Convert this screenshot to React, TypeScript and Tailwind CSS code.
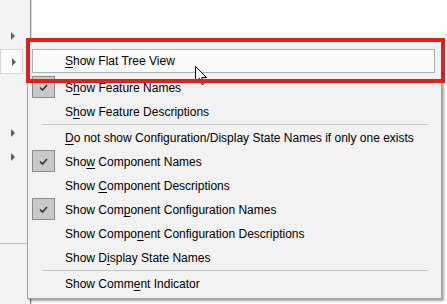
import React from 'react';

type Item = {
  pre: string;
  key: string;
  post: string;
  checked?: boolean;
};

const groupA: Item[] = [
  { pre: 'S', key: 'h', post: 'ow Feature Names', checked: true },
  { pre: 'S', key: 'h', post: 'ow Feature Descriptions' },
];

const groupB: Item[] = [
  { pre: '', key: 'D', post: 'o not show Configuration/Display State Names if only one exists' },
  { pre: 'Sho', key: 'w', post: ' Component Names', checked: true },
  { pre: 'Show ', key: 'C', post: 'omponent Descriptions' },
  { pre: 'Show Com', key: 'p', post: 'onent Configuration Names', checked: true },
  { pre: 'Show Compo', key: 'n', post: 'ent Configuration Descriptions' },
  { pre: 'Show D', key: 'i', post: 'splay State Names' },
];

const groupC: Item[] = [{ pre: 'Show Comm', key: 'e', post: 'nt Indicator' }];

const Arrow = () => (
  <div className="ml-[11px] w-0 h-0 border-y-[4px] border-y-transparent border-l-[4px] border-l-[#606060]" />
);

const Label = ({ item }: { item: Item }) => (
  <span className="whitespace-nowrap text-[12px] text-black leading-none">
    {item.pre}
    <u className="underline underline-offset-2">{item.key}</u>
    {item.post}
  </span>
);

const MenuRow = ({ item }: { item: Item }) => (
  <div className="h-[24px] flex items-center pl-[4px]">
    <div className="w-[23px] h-[22px] flex items-center justify-center">
      {item.checked && (
        <div className="w-[23px] h-[22px] border border-[#8a8a8a] bg-[#c9c9c9] flex items-center justify-center">
          <svg width="9" height="7" viewBox="0 0 9 7">
            <path d="M1 3.5 L3.5 6 L8 1" fill="none" stroke="#303030" strokeWidth="1.6" />
          </svg>
        </div>
      )}
    </div>
    <div className="ml-[10px]">
      <Label item={item} />
    </div>
  </div>
);

const Separator = () => (
  <div className="h-[2px] flex items-center">
    <div className="ml-[14px] w-[386px] h-px bg-[#c4c4c4]" />
  </div>
);

const App = () => {
  return (
    <div
      className="relative w-[447px] h-[304px] overflow-hidden bg-white flex"
      style={{ fontFamily: '"Segoe UI", "Liberation Sans", Arial, sans-serif' }}
    >
      {/* side panel behind the popup */}
      <div className="w-[30px] h-full bg-[#f3f3f3] flex flex-col pt-[23px]">
        <div className="h-[26px] flex items-center">
          <Arrow />
        </div>
        <div className="h-[25px] w-[23px] border border-[#d6d6d6] bg-[#fbfbfb] flex items-center">
          <Arrow />
        </div>
        <div className="h-[47px]" />
        <div className="h-[24px] flex items-center">
          <Arrow />
        </div>
        <div className="h-[24px] flex items-center">
          <Arrow />
        </div>
        <div className="h-[74px]" />
        <div className="h-px w-full bg-[#bcbcbc]" />
      </div>
      <div className="w-px h-full bg-[#8c8c8c]" />
      <div className="w-px h-full bg-[#dadada]" />
      <div className="flex-1 h-full bg-white" />

      {/* context menu */}
      <div className="absolute left-[27px] top-[41px] w-[415px] h-[258px] border border-[#a0a0a0] bg-[#f2f2f2] shadow-[2px_2px_2px_rgba(0,0,0,0.35)] pt-[7px]">
        <div className="ml-[4px] w-[403px] h-[24px] border border-[#adadad] bg-[#fbfbfb] flex items-center pl-[32px]">
          <Label item={{ pre: '', key: 'S', post: 'how Flat Tree View' }} />
        </div>
        <div className="h-[2px]" />
        {groupA.map((item, i) => (
          <MenuRow key={i} item={item} />
        ))}
        <Separator />
        {groupB.map((item, i) => (
          <MenuRow key={i} item={item} />
        ))}
        <Separator />
        {groupC.map((item, i) => (
          <MenuRow key={i} item={item} />
        ))}
      </div>

      {/* mouse pointer */}
      <svg className="absolute left-[195px] top-[66px]" width="13" height="20" viewBox="0 0 13 20">
        <path d="M0.5 0.5 L0.5 16 L4.3 12.3 L7 18.5 L9.3 17.5 L6.7 11.5 L11.5 11.5 Z" fill="white" stroke="black" strokeWidth="1" />
      </svg>

      {/* red annotation frame */}
      <div className="absolute left-[26px] top-[38px] w-[419px] h-[45px] border-4 border-[#e0201c]" />
    </div>
  );
};

export default App;
